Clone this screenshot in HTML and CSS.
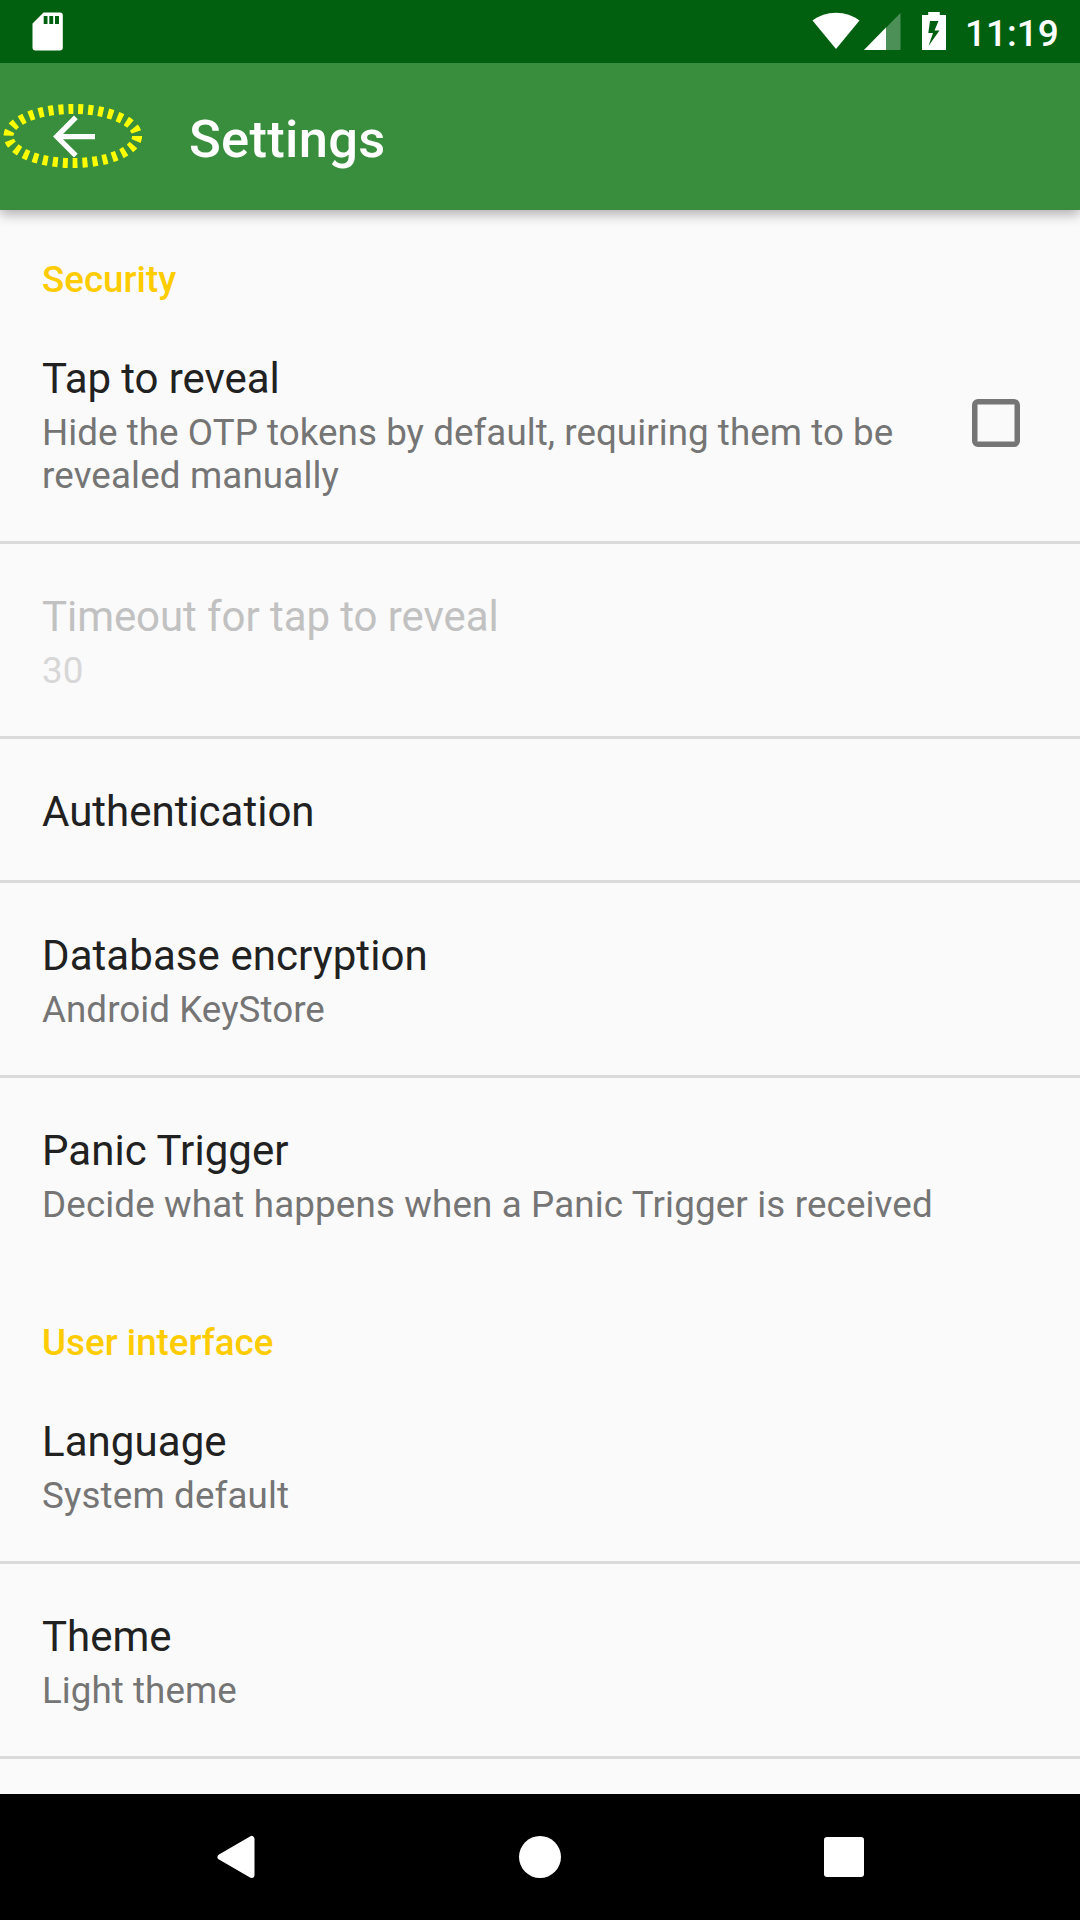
FILE: index.html
```html
<!DOCTYPE html>
<html lang="en">
<head>
<meta charset="utf-8">
<title>Settings</title>
<link rel="stylesheet" href="styles.css">
</head>
<body>
<div class="screen">
  <header class="status">
    <svg class="sd" width="31" height="39" viewBox="0 0 31 39"><path fill="#fff" fill-rule="evenodd" d="M11.500 0.500H28a2.800 2.800 0 0 1 2.800 2.800V35.500a3 3 0 0 1-3 3H3.500a3 3 0 0 1-3-3V11.500ZM11.700 4V12H15.500V4ZM17.300 4V12H21.200V4ZM23 4V12H27V4Z"/></svg>
    <div class="status-right">
      <svg class="wifi" width="48" height="38" viewBox="0 0 48 38"><path fill="#fff" d="M24 37L0.500 8.500C7 3.500 15 0.700 24 0.700S41 3.500 47.500 8.500Z"/></svg>
      <svg class="cell" width="37" height="37" viewBox="0 0 37 37"><path fill="#fff" opacity=".3" d="M0 37H36.500V0Z"/><path fill="#fff" d="M0 37H22V14.500Z"/></svg>
      <svg class="battery" width="24" height="38" viewBox="0 0 24 38"><path fill="#fff" fill-rule="evenodd" d="M6.200 0H17.800V3H24V38H0V3H6.200ZM8 9L6.300 21H11L6.500 34L17.500 18.500H12.500L16.500 9Z"/></svg>
      <span class="clock">11:19</span>
    </div>
  </header>
  <div class="appbar">
    <svg class="back" width="148" height="73" viewBox="0 0 148 73"><ellipse cx="72.800" cy="36" rx="64.300" ry="27" fill="none" stroke="#ff0" stroke-width="10" stroke-dasharray="5 4.970"/><path transform="translate(42.500 5) scale(2.625)" d="M20 11H7.830l5.590-5.590L12 4l-8 8 8 8 1.410-1.410L7.830 13H20v-2z" fill="#fff"/></svg>
    <h1>Settings</h1>
  </div>
  <main class="list">
    <h2>Security</h2>
    <section class="item"><div class="copy"><div class="title tight">Tap to reveal</div><div class="sub">Hide the OTP tokens by default, requiring them to be<br><span class="loose">revealed manually</span></div></div><span class="box"></span></section>
    <section class="item disabled"><div class="copy"><div class="title tight">Timeout for tap to reveal</div><div class="sub">30</div></div></section>
    <section class="item"><div class="title">Authentication</div></section>
    <section class="item"><div class="copy"><div class="title wide">Database encryption</div><div class="sub">Android KeyStore</div></div></section>
    <section class="item last"><div class="copy"><div class="title wide">Panic Trigger</div><div class="sub loose">Decide what happens when a Panic Trigger is received</div></div></section>
    <h2>User interface</h2>
    <section class="item"><div class="copy"><div class="title wide">Language</div><div class="sub loose">System default</div></div></section>
    <section class="item"><div class="copy"><div class="title">Theme</div><div class="sub">Light theme</div></div></section>
  </main>
  <nav class="nav">
    <svg width="1080" height="126" viewBox="0 0 1080 126"><path d="M220.500 63L251.500 45V81Z" fill="#fff" stroke="#fff" stroke-width="6" stroke-linejoin="round"/><circle cx="540" cy="63" r="21" fill="#fff"/><rect x="824" y="43" width="40" height="40" rx="3" fill="#fff"/></svg>
  </nav>
</div>
</body>
</html>
```
FILE: styles.css
```css
body { margin: 0; font-family: Roboto, sans-serif; }
.screen { width: 1080px; height: 1920px; display: flex; flex-direction: column; overflow: hidden; background: #fafafa; }
.status { height: 63px; flex: none; display: flex; justify-content: space-between; background: #00600f; padding: 0 21px 0 32px; box-sizing: border-box; position: relative; z-index: 2; }
.sd { margin-top: 12px; }
.status-right { display: flex; }
.wifi { margin: 12px 4px 0 0; }
.cell { margin: 13px 21px 0 0; }
.battery { margin: 12px 19px 0 0; }
.clock { width: 94px; white-space: nowrap; color: #fff; font-size: 37px; line-height: 67px; font-weight: 500; }
.appbar { height: 147px; flex: none; display: flex; align-items: center; background: #388e3c; box-shadow: 0 4px 12px rgba(0,0,0,.32); position: relative; z-index: 1; }
.back { margin-right: 41px; }
h1 { margin: 5px 0 0; color: #fff; font-size: 52.5px; font-weight: 500; line-height: 62px; letter-spacing: .28px; }
.list { flex: 1; min-height: 0; overflow: hidden; }
h2 { margin: 0; padding: 48px 42px 0; height: 96px; box-sizing: border-box; color: #fc0; font-size: 36.75px; font-weight: 500; line-height: 43px; }
.item { border-bottom: 3px solid #dadada; padding: 48px 42px 44px; display: flex; justify-content: space-between; box-sizing: border-box; }
.title { color: #212121; font-size: 42px; line-height: 49px; }
.tight { letter-spacing: -.07px; }
.wide { letter-spacing: .07px; }
.sub { color: #757575; font-size: 36.75px; line-height: 43px; margin-top: 8px; letter-spacing: .05px; }
.loose { letter-spacing: .14px; }
.disabled .title { color: #c1c1c1; }
.disabled .sub { color: #d7d7d7; }
.last { border-color: transparent; }
.box { width: 48px; height: 48px; margin: 45px 18px 0 0; box-sizing: border-box; border: 5px solid #757575; border-radius: 6px; box-shadow: inset 0 0 0 .5px #757575; }
.nav { height: 126px; flex: none; background: #000; }
.nav svg { display: block; }
```
